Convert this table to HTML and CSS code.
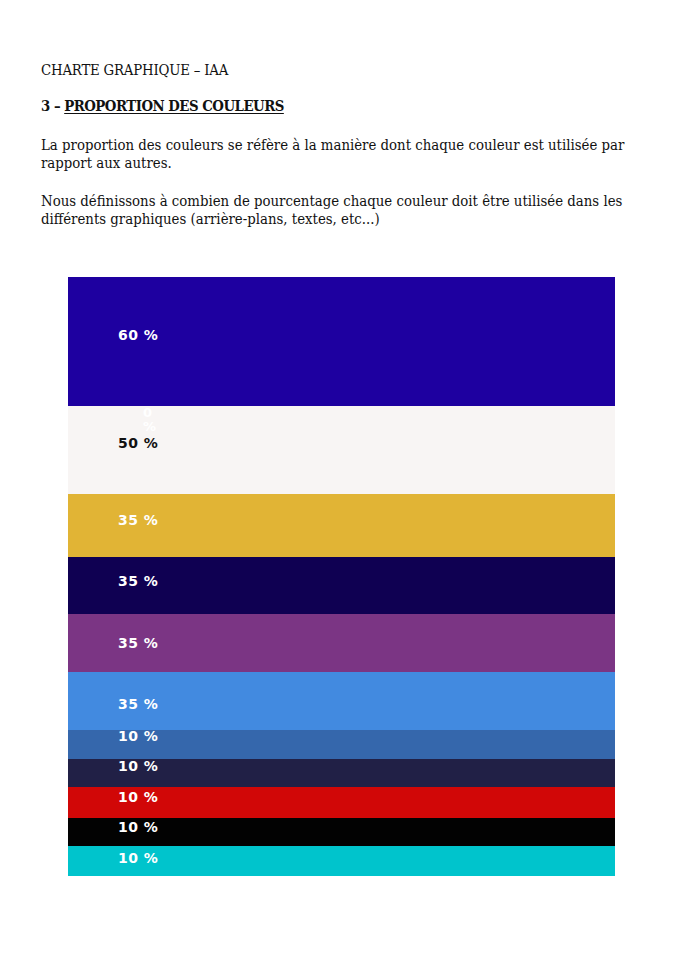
FILE: index.html
```html
<!DOCTYPE html>
<html lang="fr">
<head>
<meta charset="utf-8">
<title>Charte graphique – IAA</title>
<link rel="stylesheet" href="styles.css">
</head>
<body>
<div class="page">
  <p class="title">CHARTE GRAPHIQUE – IAA</p>
  <h1 class="heading">3 – <u>PROPORTION DES COULEURS</u></h1>
  <p class="para p1">La proportion des couleurs se réfère à la manière dont chaque couleur est utilisée par rapport aux autres.</p>
  <p class="para p2">Nous définissons à combien de pourcentage chaque couleur doit être utilisée dans les différents graphiques (arrière-plans, textes, etc...)</p>

  <div class="chart">
    <div class="band c-blue" style="height:129px"><span class="label" style="margin-top:51px">60 %</span></div>
    <div class="band c-white" style="height:88px"><span class="ghost">0 %</span><span class="label dark" style="margin-top:30px">50 %</span></div>
    <div class="band c-gold" style="height:63px"><span class="label" style="margin-top:19px">35 %</span></div>
    <div class="band c-navy" style="height:57px"><span class="label" style="margin-top:17px">35 %</span></div>
    <div class="band c-purple" style="height:58px"><span class="label" style="margin-top:22px">35 %</span></div>
    <div class="band c-sky" style="height:58px"><span class="label" style="margin-top:25px">35 %</span></div>
    <div class="band c-steel" style="height:29px"><span class="label" style="margin-top:-1px">10 %</span></div>
    <div class="band c-ink" style="height:28px"><span class="label" style="margin-top:0px">10 %</span></div>
    <div class="band c-red" style="height:31px"><span class="label" style="margin-top:3px">10 %</span></div>
    <div class="band c-black" style="height:28px"><span class="label" style="margin-top:2px">10 %</span></div>
    <div class="band c-cyan" style="height:30px"><span class="label" style="margin-top:5px">10 %</span></div>
  </div>
</div>
</body>
</html>
```

FILE: styles.css
```css
html, body {
  margin: 0;
  padding: 0;
  background: #ffffff;
}

.page {
  padding: 61px 41px 80px 41px;
  font-family: "DejaVu Serif Condensed", "DejaVu Serif", "Liberation Serif", serif;
  font-stretch: condensed;
  font-size: 14.8px;
  line-height: 18.5px;
  color: #111111;
}

.title {
  margin: 0;
  letter-spacing: -0.2px;
}

.heading {
  margin: 17px 0 0 0;
  font-size: 14.8px;
  font-weight: bold;
  line-height: 18.5px;
  letter-spacing: -0.5px;
}

.heading u {
  text-decoration: underline;
  text-decoration-thickness: 1px;
  text-underline-offset: 2px;
}

.para {
  margin: 0;
  width: 601px;
}

.p1 {
  margin-top: 20.5px;
}

.p2 {
  margin-top: 19px;
}

.chart {
  margin: 48px 0 0 27px;
  width: 547px;
  display: flex;
  flex-direction: column;
}

.band {
  position: relative;
  display: flex;
  flex-direction: column;
  padding-left: 50px;
  overflow: visible;
}

.label {
  display: block;
  font-family: "DejaVu Sans", Verdana, sans-serif;
  font-stretch: normal;
  font-weight: bold;
  font-size: 14px;
  letter-spacing: 0.5px;
  line-height: 14px;
  color: #ffffff;
  white-space: nowrap;
  position: relative;
  z-index: 1;
}

.label.dark {
  color: #111111;
}

.ghost {
  position: absolute;
  left: 75px;
  top: 0;
  width: 14px;
  font-family: "DejaVu Sans", Verdana, sans-serif;
  font-stretch: normal;
  font-weight: bold;
  font-size: 13px;
  line-height: 14px;
  color: #ffffff;
}

.c-blue { background: #1e00a0; }
.c-white { background: #f8f5f4; }
.c-gold { background: #e1b435; }
.c-navy { background: #0f0052; }
.c-purple { background: #7b3584; }
.c-sky { background: #428ae0; }
.c-steel { background: #3567ac; }
.c-ink { background: #212046; }
.c-red { background: #d10707; }
.c-black { background: #020202; }
.c-cyan { background: #00c4cc; }
```
